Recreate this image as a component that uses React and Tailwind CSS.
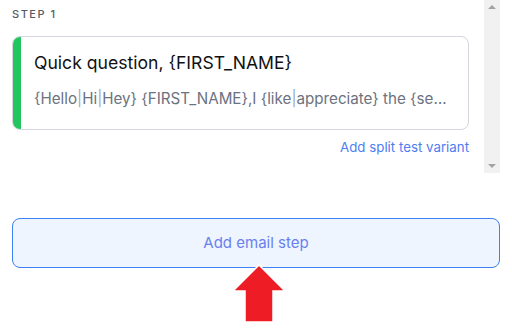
import React from 'react';

const Pipe = () => <span className="text-[#9aa6c4]">|</span>;

const App = () => {
  return (
    <div className="w-[512px] h-[329px] bg-white px-3 overflow-hidden" style={{ fontFamily: 'Inter, "Noto Sans", sans-serif' }}>
      {/* step area with scrollbar */}
      <div className="flex h-[173px]">
        <div className="flex-1 min-w-0 pr-[15px]">
          <div className="pt-[6px] h-[36px] text-[11px] font-medium tracking-[0.14em] text-[#555b66]">STEP 1</div>
          <div className="flex h-[94px] rounded-lg border border-[#d4d6dd] overflow-hidden">
            <div className="w-[8px] bg-[#22c55e]"></div>
            <div className="flex-1 min-w-0 pl-[13px] pr-[16px] pt-[14px]">
              <div className="text-[17.6px] leading-[24px] text-[#111]">Quick question, {'{FIRST_NAME}'}</div>
              <div className="mt-[14px] text-[15.2px] leading-[20px] text-[#6b7280] truncate">
                {'{Hello'}<Pipe />Hi<Pipe />{'Hey} {FIRST_NAME},I {like'}<Pipe />{'appreciate} the {services} you provide'}
              </div>
            </div>
          </div>
          <div className="mt-[8px] text-right text-[13.3px] leading-[18px] text-[#4f7df0]">Add split test variant</div>
        </div>
        <div className="w-[16px] bg-[#f1f1f1] flex flex-col items-center justify-between py-[5px]">
          <div className="w-0 h-0 border-l-[4px] border-r-[4px] border-b-[4px] border-l-transparent border-r-transparent border-b-[#a3a3a3]"></div>
          <div className="w-0 h-0 border-l-[4px] border-r-[4px] border-t-[4px] border-l-transparent border-r-transparent border-t-[#a3a3a3]"></div>
        </div>
      </div>

      {/* add email step */}
      <div className="relative mt-[45px]">
        <button className="w-full h-[50px] rounded-lg border border-[#3b82f6] bg-[#eef5ff] text-[15px] text-[#6a7ff0]">
          Add email step
        </button>
        <svg className="absolute left-[218px] top-[46px]" width="58" height="60" viewBox="0 0 58 60">
          <polygon points="29,1 55,27 43,27 43,58 15,58 15,27 3,27" fill="#ee1c25" stroke="#ffffff" strokeWidth="1.5" strokeLinejoin="miter" />
        </svg>
      </div>
    </div>
  );
};

export default App;
